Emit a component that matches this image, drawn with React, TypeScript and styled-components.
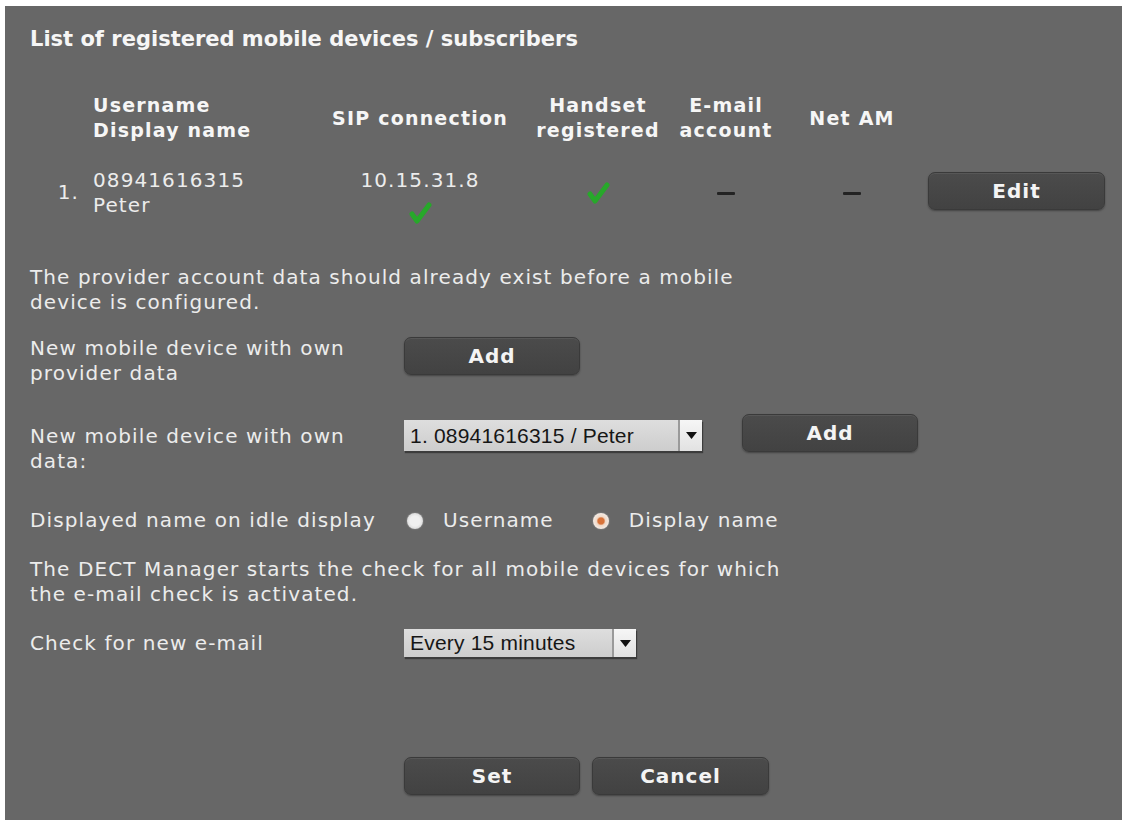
import React from "react";
import styled, { createGlobalStyle } from "styled-components";

const GlobalStyle = createGlobalStyle`
  html, body { margin: 0; padding: 0; background: #ffffff; }
  body { font-family: "DejaVu Sans", Verdana, sans-serif; }
`;

const Panel = styled.div`
  margin: 6px 6px 4px 5px;
  width: 1117px;
  height: 814px;
  box-sizing: border-box;
  background: #676767;
  padding: 19px 25px 0 25px;
  color: #f0f0f0;
  display: flex;
  flex-direction: column;
`;

const Title = styled.h1`
  margin: 0;
  font-size: 21px;
  line-height: 28px;
  font-weight: bold;
  color: #f6f6f6;
`;

const Table = styled.div`
  margin-top: 40px;
  display: grid;
  grid-template-columns: 50px 250px 180px 176px 80px 162px 177px;
  grid-auto-rows: 50px;
  row-gap: 25px;
`;

const Cell = styled.div<{
  $align?: "left" | "center" | "right";
  $padLeft?: number;
  $padRight?: number;
  $valign?: "start" | "center";
  $head?: boolean;
}>`
  display: flex;
  flex-direction: column;
  min-width: 0;
  align-items: ${(p) =>
    p.$align === "left" ? "flex-start" : p.$align === "right" ? "flex-end" : "center"};
  justify-content: ${(p) => (p.$valign === "start" ? "flex-start" : "center")};
  padding-left: ${(p) => p.$padLeft ?? 0}px;
  padding-right: ${(p) => p.$padRight ?? 0}px;
  font-size: ${(p) => (p.$head ? 19 : 20)}px;
  letter-spacing: ${(p) => (p.$head ? 1.2 : 1.1)}px;
  font-weight: ${(p) => (p.$head ? "bold" : "normal")};
  line-height: 25px;
  white-space: nowrap;
  color: ${(p) => (p.$head ? "#f6f6f6" : "#ececec")};
`;

const Num = styled.span`
  margin-top: 12px;
`;

const Dash = styled.span`
  display: block;
  width: 18px;
  height: 3px;
  background: #232323;
  border-radius: 1px;
`;

const Button = styled.button<{ $w?: number; $mt?: number; $ml?: number }>`
  width: ${(p) => p.$w ?? 176}px;
  height: 38px;
  margin-top: ${(p) => p.$mt ?? 0}px;
  margin-left: ${(p) => p.$ml ?? 0}px;
  flex: none;
  box-sizing: border-box;
  background: linear-gradient(#4b4b4b, #424242);
  border: 1px solid #3a3a3a;
  border-radius: 7px;
  box-shadow: 0 1px 2px rgba(0, 0, 0, 0.35), inset 0 1px 0 rgba(255, 255, 255, 0.07);
  color: #f4f4f4;
  font-family: "DejaVu Sans", Verdana, sans-serif;
  font-weight: bold;
  font-size: 20px;
  letter-spacing: 1px;
  padding: 0;
  cursor: pointer;
`;

const EditButton = styled(Button)`
  align-self: start;
  margin-top: 4px;
`;

const Paragraph = styled.p<{ $mt: number }>`
  margin: ${(p) => p.$mt}px 0 0 0;
  font-size: 20px;
  letter-spacing: 1.1px;
  line-height: 25px;
  color: #ececec;
  white-space: nowrap;
`;

const FormRow = styled.div<{ $mt: number; $align?: string }>`
  margin-top: ${(p) => p.$mt}px;
  display: flex;
  align-items: ${(p) => p.$align ?? "flex-start"};
`;

const Label = styled.div<{ $mt?: number }>`
  width: 374px;
  flex: none;
  font-size: 20px;
  letter-spacing: 1.1px;
  line-height: 25px;
  white-space: nowrap;
  margin-top: ${(p) => p.$mt ?? 0}px;
  color: #ececec;
`;

const SelectBox = styled.div<{ $w: number; $h: number; $mt?: number }>`
  width: ${(p) => p.$w}px;
  height: ${(p) => p.$h}px;
  margin-top: ${(p) => p.$mt ?? 0}px;
  box-sizing: border-box;
  display: flex;
  background: linear-gradient(#dedede, #cdcdcd);
  box-shadow: 1px 2px 1px #3c3c3c;
  font-family: "Liberation Sans", Arial, sans-serif;
  font-size: 21px;
  letter-spacing: 0.2px;
  color: #161616;
  flex: none;
`;

const SelectText = styled.span`
  flex: 1;
  padding-left: 6px;
  display: flex;
  align-items: center;
  white-space: nowrap;
  overflow: hidden;
`;

const SelectArrow = styled.span`
  width: 22px;
  flex: none;
  background: linear-gradient(#f6f6f6, #e2e2e2);
  border-left: 2px solid #9a9a9a;
  display: flex;
  align-items: center;
  justify-content: center;
`;

const RadioGroup = styled.div`
  display: flex;
  align-items: center;
  font-size: 20px;
  letter-spacing: 1.1px;
  line-height: 25px;
  color: #ececec;
`;

const Radio = styled.span<{ $checked?: boolean; $ml: number }>`
  width: 16px;
  height: 16px;
  border-radius: 50%;
  margin-left: ${(p) => p.$ml}px;
  margin-right: 20px;
  background: ${(p) =>
    p.$checked
      ? "radial-gradient(circle, #d8733a 0 3px, #f0d9c8 4.5px, #f4ece6 8px)"
      : "radial-gradient(circle, #f0f0f0 0 5px, #dcdcdc 8px)"};
  box-shadow: 0 0 1.5px rgba(255, 255, 255, 0.5);
  flex: none;
`;

const RadioText = styled.span``;

const Actions = styled.div`
  margin-top: 100px;
  margin-left: 374px;
  display: flex;
  gap: 12px;
`;

const CheckSvg = styled.svg<{ $mt?: number }>`
  flex: none;
  margin-top: ${(p) => p.$mt ?? 0}px;
  filter: blur(0.6px);
`;

const Check = ({ mt = 0 }: { mt?: number }) => (
  <CheckSvg $mt={mt} width="28" height="24" viewBox="0 0 28 24">
    <path
      d="M6 13 L11 20 L23 4"
      fill="none"
      stroke="#27a82a"
      strokeWidth="5"
      strokeLinecap="round"
      strokeLinejoin="round"
    />
  </CheckSvg>
);

const Triangle = () => (
  <svg width="11" height="7" viewBox="0 0 11 7">
    <path d="M0 0 H11 L5.5 7 Z" fill="#111" />
  </svg>
);

export default function App() {
  return (
    <>
      <GlobalStyle />
      <Panel>
        <Title>List of registered mobile devices / subscribers</Title>
        <Table>
          <Cell $head />
          <Cell $head $align="left" $padLeft={13}>
            <span>Username</span>
            <span>Display name</span>
          </Cell>
          <Cell $head>
            <span>SIP connection</span>
          </Cell>
          <Cell $head>
            <span>Handset</span>
            <span>registered</span>
          </Cell>
          <Cell $head>
            <span>E-mail</span>
            <span>account</span>
          </Cell>
          <Cell $head $padLeft={10}>
            <span>Net AM</span>
          </Cell>
          <Cell $head />

          <Cell $align="right" $valign="start" $padRight={1}>
            <Num>1.</Num>
          </Cell>
          <Cell $align="left" $valign="start" $padLeft={13}>
            <span>08941616315</span>
            <span>Peter</span>
          </Cell>
          <Cell $valign="start">
            <span>10.15.31.8</span>
            <Check mt={8} />
          </Cell>
          <Cell>
            <Check />
          </Cell>
          <Cell>
            <Dash />
          </Cell>
          <Cell $padLeft={10}>
            <Dash />
          </Cell>
          <EditButton $w={177}>Edit</EditButton>
        </Table>

        <Paragraph $mt={47}>
          The provider account data should already exist before a mobile
          <br />
          device is configured.
        </Paragraph>

        <FormRow $mt={21}>
          <Label>
            New mobile device with own
            <br />
            provider data
          </Label>
          <Button $mt={1}>Add</Button>
        </FormRow>

        <FormRow $mt={28}>
          <Label $mt={10}>
            New mobile device with own
            <br />
            data:
          </Label>
          <SelectBox $w={298} $h={31} $mt={6}>
            <SelectText>1. 08941616315 / Peter</SelectText>
            <SelectArrow>
              <Triangle />
            </SelectArrow>
          </SelectBox>
          <Button $ml={40}>Add</Button>
        </FormRow>

        <FormRow $mt={34} $align="center">
          <Label>Displayed name on idle display</Label>
          <RadioGroup>
            <Radio $ml={3} />
            <RadioText>Username</RadioText>
            <Radio $ml={39} $checked />
            <RadioText>Display name</RadioText>
          </RadioGroup>
        </FormRow>

        <Paragraph $mt={24}>
          The DECT Manager starts the check for all mobile devices for which
          <br />
          the e-mail check is activated.
        </Paragraph>

        <FormRow $mt={22} $align="center">
          <Label>Check for new e-mail</Label>
          <SelectBox $w={232} $h={28}>
            <SelectText>Every 15 minutes</SelectText>
            <SelectArrow>
              <Triangle />
            </SelectArrow>
          </SelectBox>
        </FormRow>

        <Actions>
          <Button>Set</Button>
          <Button $w={177}>Cancel</Button>
        </Actions>
      </Panel>
    </>
  );
}
